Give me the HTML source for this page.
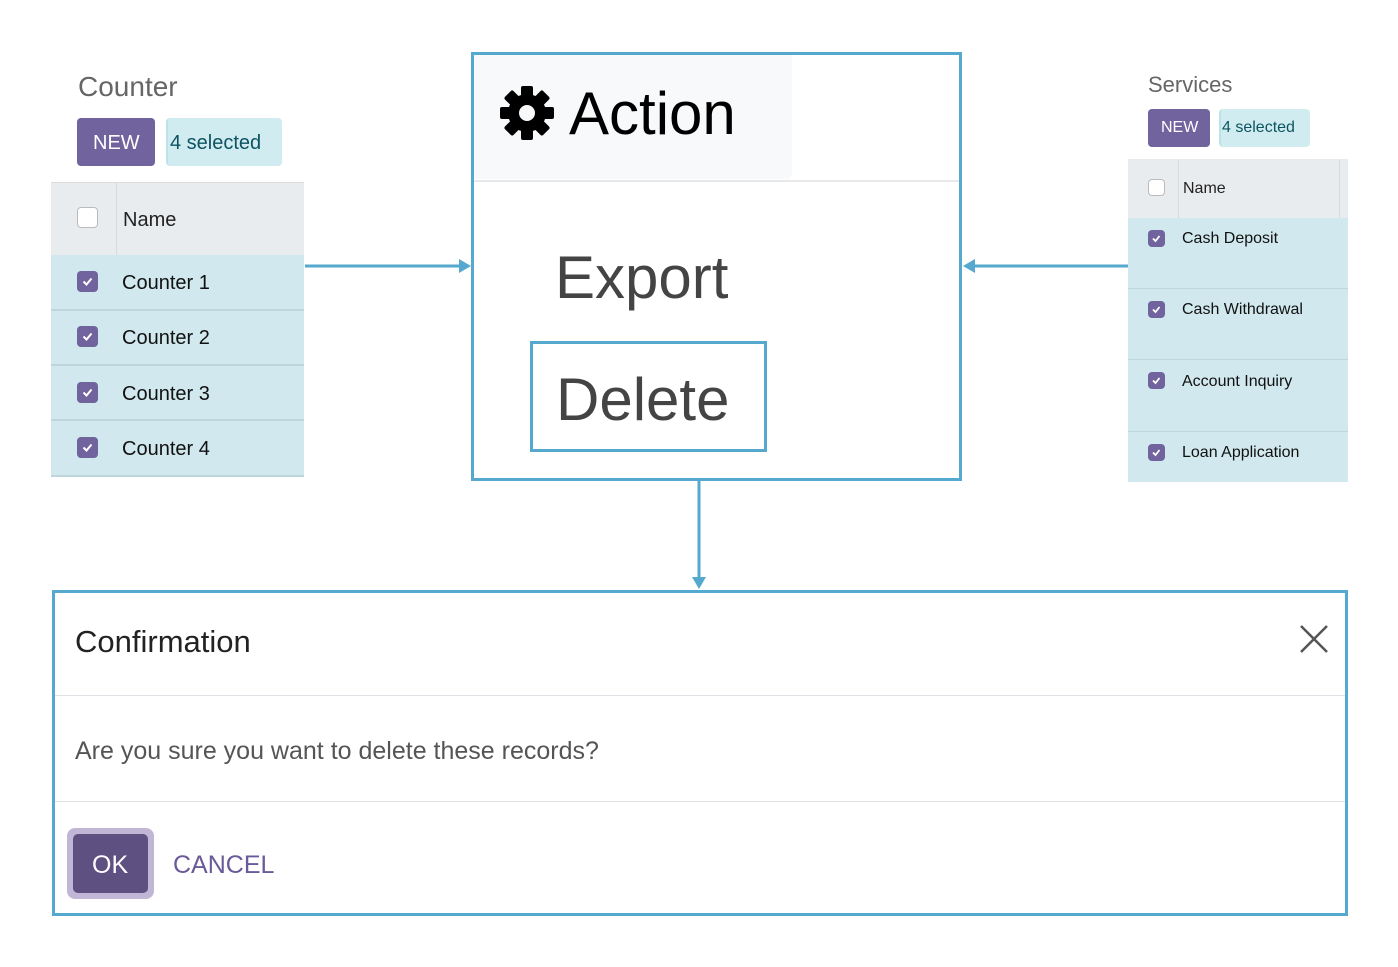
<!DOCTYPE html>
<html><head><meta charset="utf-8"><style>
*{margin:0;padding:0;box-sizing:border-box}
body{width:1398px;height:967px;background:#fff;position:relative;overflow:hidden;font-family:"Liberation Sans",sans-serif}
.a{position:absolute}
.t{position:absolute;white-space:nowrap;line-height:1}
.cb{position:absolute;border-radius:4px;background:#71639e}
.cb svg{position:absolute;left:0;top:0}
.ucb{position:absolute;border:1.5px solid #bbb;border-radius:4px;background:#fff}
</style></head><body>
<!-- Left panel -->
<div class="t" style="left:78px;top:73px;font-size:28px;color:#666">Counter</div>
<div class="a" style="left:77px;top:118px;width:78px;height:48px;background:#71639e;border-radius:4px"></div>
<div class="t" style="left:93px;top:133px;font-size:20px;color:#fff">NEW</div>
<div class="a" style="left:166px;top:118px;width:116px;height:48px;background:#d1ecf1;border-radius:4px;border-left:2px solid #bde3ea"></div>
<div class="t" style="left:170px;top:133px;font-size:20px;color:#0c5460">4 selected</div>
<div class="a" style="left:51px;top:182px;width:253px;height:73px;background:#e9ecef;border-top:1px solid #ddd"></div>
<div class="a" style="left:116px;top:183px;width:1px;height:72px;background:#d8dadd"></div>
<div class="ucb" style="left:77px;top:207px;width:21px;height:21px"></div>
<div class="t" style="left:123px;top:210px;font-size:20px;color:#222">Name</div>
<div class="a" style="left:51px;top:255px;width:253px;height:221px;background:#d1e9ee"></div>
<div class="a" style="left:51px;top:309px;width:253px;height:2px;background:#bcd6dc"></div>
<div class="a" style="left:51px;top:364px;width:253px;height:2px;background:#bcd6dc"></div>
<div class="a" style="left:51px;top:419px;width:253px;height:2px;background:#bcd6dc"></div>
<div class="a" style="left:51px;top:475px;width:253px;height:2px;background:#bcd6dc"></div>
<div class="cb" style="left:77px;top:271px;width:21px;height:21px"><svg width="21" height="21"><path d="M6.5 10.5l3 3 5-6" stroke="#fff" stroke-width="2" fill="none"/></svg></div>
<div class="cb" style="left:77px;top:326px;width:21px;height:21px"><svg width="21" height="21"><path d="M6.5 10.5l3 3 5-6" stroke="#fff" stroke-width="2" fill="none"/></svg></div>
<div class="cb" style="left:77px;top:382px;width:21px;height:21px"><svg width="21" height="21"><path d="M6.5 10.5l3 3 5-6" stroke="#fff" stroke-width="2" fill="none"/></svg></div>
<div class="cb" style="left:77px;top:437px;width:21px;height:21px"><svg width="21" height="21"><path d="M6.5 10.5l3 3 5-6" stroke="#fff" stroke-width="2" fill="none"/></svg></div>
<div class="t" style="left:122px;top:273px;font-size:20px;color:#111">Counter 1</div>
<div class="t" style="left:122px;top:328px;font-size:20px;color:#111">Counter 2</div>
<div class="t" style="left:122px;top:384px;font-size:20px;color:#111">Counter 3</div>
<div class="t" style="left:122px;top:439px;font-size:20px;color:#111">Counter 4</div>

<!-- connectors -->
<svg class="a" style="left:0;top:0" width="1398" height="967">
<line x1="305" y1="266" x2="462" y2="266" stroke="#55a8ce" stroke-width="3"/>
<polygon points="459,259 471,266 459,273" fill="#55a8ce"/>
<line x1="1128" y1="266" x2="972" y2="266" stroke="#55a8ce" stroke-width="3"/>
<polygon points="975,259 963,266 975,273" fill="#55a8ce"/>
<line x1="699" y1="481" x2="699" y2="580" stroke="#55a8ce" stroke-width="3"/>
<polygon points="692,577 699,589 706,577" fill="#55a8ce"/>
</svg>

<!-- Center box -->
<div class="a" style="left:471px;top:52px;width:491px;height:429px;border:3px solid #55a8ce;background:#fff"></div>
<div class="a" style="left:474px;top:55px;width:318px;height:124px;background:#f8f9fa;border-radius:0 0 6px 0"></div>
<div class="a" style="left:474px;top:180px;width:485px;height:2px;background:#e6e8ea"></div>
<svg class="a" style="left:500px;top:86px" width="54" height="54" viewBox="0 0 54 54">
<g fill="#000" transform="translate(27,27)">
<circle r="19"/>
<rect x="-6" y="-27" width="12" height="12" rx="2"/>
<rect x="-6" y="-27" width="12" height="12" rx="2" transform="rotate(45)"/>
<rect x="-6" y="-27" width="12" height="12" rx="2" transform="rotate(90)"/>
<rect x="-6" y="-27" width="12" height="12" rx="2" transform="rotate(135)"/>
<rect x="-6" y="-27" width="12" height="12" rx="2" transform="rotate(180)"/>
<rect x="-6" y="-27" width="12" height="12" rx="2" transform="rotate(225)"/>
<rect x="-6" y="-27" width="12" height="12" rx="2" transform="rotate(270)"/>
<rect x="-6" y="-27" width="12" height="12" rx="2" transform="rotate(315)"/>
<circle r="8" fill="#f8f9fa"/>
</g></svg>
<div class="t" style="left:569px;top:84px;font-size:60px;color:#000">Action</div>
<div class="t" style="left:555px;top:248px;font-size:60px;color:#444">Export</div>
<div class="a" style="left:530px;top:341px;width:237px;height:111px;border:3px solid #55a8ce"></div>
<div class="t" style="left:556px;top:370px;font-size:60px;color:#444">Delete</div>

<!-- Right panel -->
<div class="t" style="left:1148px;top:74px;font-size:22px;color:#666">Services</div>
<div class="a" style="left:1148px;top:109px;width:62px;height:38px;background:#71639e;border-radius:4px"></div>
<div class="t" style="left:1161px;top:120px;font-size:16px;color:#fff">NEW</div>
<div class="a" style="left:1219px;top:109px;width:91px;height:38px;background:#d1ecf1;border-radius:4px;border-left:2px solid #bde3ea"></div>
<div class="t" style="left:1222px;top:120px;font-size:16px;color:#0c5460">4 selected</div>
<div class="a" style="left:1128px;top:159px;width:220px;height:59px;background:#e9ecef"></div>
<div class="a" style="left:1178px;top:160px;width:1px;height:58px;background:#d8dadd"></div>
<div class="a" style="left:1339px;top:160px;width:1px;height:58px;background:#d8dadd"></div>
<div class="ucb" style="left:1148px;top:179px;width:17px;height:17px"></div>
<div class="t" style="left:1183px;top:181px;font-size:16px;color:#222">Name</div>
<div class="a" style="left:1128px;top:218px;width:220px;height:264px;background:#d1e9ee"></div>
<div class="a" style="left:1128px;top:288px;width:220px;height:1px;background:#bcd6dc"></div>
<div class="a" style="left:1128px;top:359px;width:220px;height:1px;background:#bcd6dc"></div>
<div class="a" style="left:1128px;top:431px;width:220px;height:1px;background:#bcd6dc"></div>
<div class="cb" style="left:1148px;top:230px;width:17px;height:17px"><svg width="17" height="17"><path d="M5 8.5l2.5 2.5 4-5" stroke="#fff" stroke-width="1.8" fill="none"/></svg></div>
<div class="cb" style="left:1148px;top:301px;width:17px;height:17px"><svg width="17" height="17"><path d="M5 8.5l2.5 2.5 4-5" stroke="#fff" stroke-width="1.8" fill="none"/></svg></div>
<div class="cb" style="left:1148px;top:372px;width:17px;height:17px"><svg width="17" height="17"><path d="M5 8.5l2.5 2.5 4-5" stroke="#fff" stroke-width="1.8" fill="none"/></svg></div>
<div class="cb" style="left:1148px;top:444px;width:17px;height:17px"><svg width="17" height="17"><path d="M5 8.5l2.5 2.5 4-5" stroke="#fff" stroke-width="1.8" fill="none"/></svg></div>
<div class="t" style="left:1182px;top:231px;font-size:16px;color:#111">Cash Deposit</div>
<div class="t" style="left:1182px;top:302px;font-size:16px;color:#111">Cash Withdrawal</div>
<div class="t" style="left:1182px;top:374px;font-size:16px;color:#111">Account Inquiry</div>
<div class="t" style="left:1182px;top:445px;font-size:16px;color:#111">Loan Application</div>

<!-- Dialog -->
<div class="a" style="left:52px;top:590px;width:1296px;height:326px;border:3px solid #55a8ce;background:#fff"></div>
<div class="t" style="left:75px;top:626px;font-size:31px;color:#222">Confirmation</div>
<svg class="a" style="left:1299px;top:624px" width="30" height="30"><path d="M2 2L28 28M28 2L2 28" stroke="#555" stroke-width="2.5"/></svg>
<div class="a" style="left:55px;top:695px;width:1290px;height:1px;background:#dee2e6"></div>
<div class="t" style="left:75px;top:739px;font-size:25px;color:#555">Are you sure you want to delete these records?</div>
<div class="a" style="left:55px;top:801px;width:1290px;height:1px;background:#dee2e6"></div>
<div class="a" style="left:67px;top:828px;width:87px;height:71px;background:#c1b6d6;border-radius:8px"></div>
<div class="a" style="left:73px;top:834px;width:75px;height:59px;background:#5f5082;border-radius:5px"></div>
<div class="t" style="left:92px;top:853px;font-size:25px;color:#fff">OK</div>
<div class="t" style="left:173px;top:853px;font-size:25px;color:#6a5a99">CANCEL</div>
</body></html>
